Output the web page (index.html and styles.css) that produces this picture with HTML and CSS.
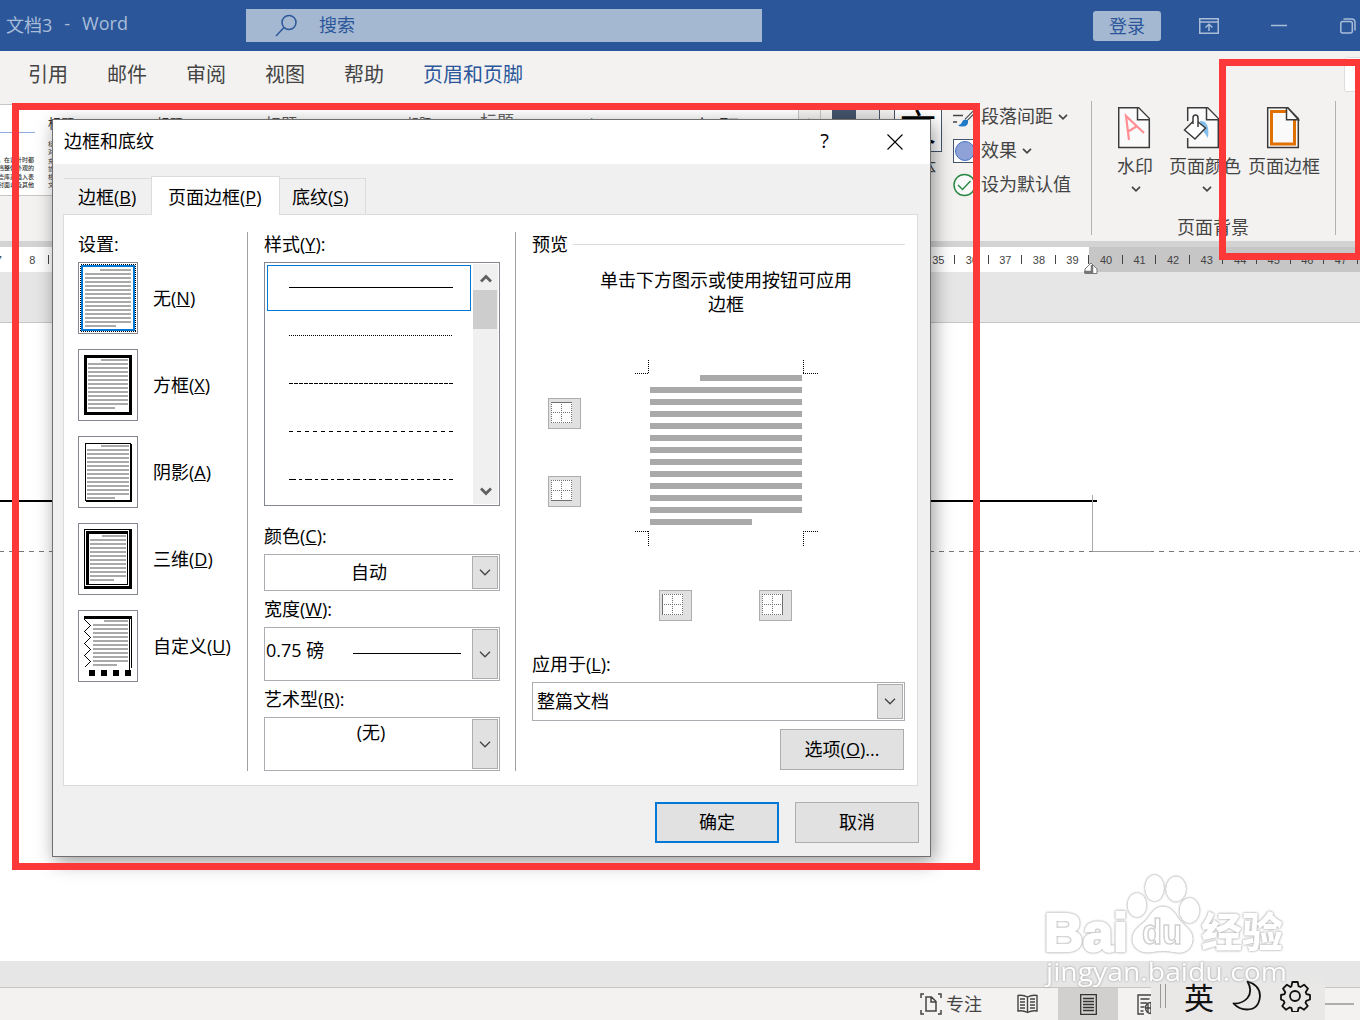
FILE: index.html
```html
<!DOCTYPE html>
<html lang="zh-CN">
  <head>
    <meta charset="utf-8">
    <title>文档3 - Word</title>
    <link rel="stylesheet" href="styles.css">
  </head>

  <body>
    <div class="app">
      <header class="titlebar">
        <div class="doc-name"><span>文档3</span><span>-</span><span class="word">Word</span></div>
        <div class="search">
          <svg width="22" height="24" viewBox="0 0 22 24" fill="none" stroke="#2b579a" stroke-width="1.5"><circle cx="14" cy="8.500" r="7"/><path d="M9 13.500L1 22"/></svg>
          <span>搜索</span>
        </div>
        <button class="login">登录</button>
        <svg class="win-icon ribbon-icon" width="20" height="16" viewBox="0 0 20 16" fill="none" stroke="#a9bdd9" stroke-width="1.500"><path d="M.75.75h18.500v14.500H.75zM1 4h18M10 13V6.500M6.500 9.500L10 6.200l3.500 3.300"/></svg>
        <svg class="win-icon min-icon" width="16" height="16" viewBox="0 0 16 16"><path d="M0 7.500h16" stroke="#a9bdd9" stroke-width="1.500"/></svg>
        <svg class="win-icon" width="16" height="16" viewBox="0 0 16 16" fill="none" stroke="#a9bdd9" stroke-width="1.500"><rect x=".8" y="3.500" width="11.500" height="11.500" rx="2"/><path d="M3.500 1h8q3.500 0 3.500 3.500v8"/></svg>
      </header>

      <nav class="tabs">
        <span>引用</span><span>邮件</span><span>审阅</span><span>视图</span><span>帮助</span><span class="current">页眉和页脚</span>
        <div class="share"></div>
      </nav>

      <div class="ribbon">
        <div class="gallery">
          <div class="style first">
            <i></i>
            <p>，在设计时都</p><p>文档整体外观的</p><p>这些库来插入表</p><p>、封面以及其他</p>
          </div>
          <div class="style second"><b>标题</b><p>标</p><p>对</p><p>充</p><p>协</p><p>格</p><p>文</p></div>
          <div class="style"><b>标题</b></div>
          <div class="style s16"><b>标题</b></div>
          <div class="style s12"><b>标题</b></div>
          <div class="style s17"><b>标题</b></div>
          <div class="style blue"><b>标题</b></div>
          <div class="style s21"><b>标题</b></div>
          <div class="more"><svg width="8" height="5" viewBox="0 0 8 5"><path d="M0 5l4-4 4 4z" fill="#aaa"/></svg></div>
        </div>
        <div class="colors"><i></i><i></i></div>
        <div class="fonts"><div class="glyph">文</div><span>字体</span></div>
        <div class="options">
          <div class="option">
            <svg width="24" height="22" viewBox="0 0 24 22" fill="none"><path d="M0 3h16M0 9.500h10M0 16h4" stroke="#444" stroke-width="1.500"/><path d="M23 4L13 14" stroke="#444" stroke-width="3.500"/><path d="M23 4L13 14" stroke="#fff" stroke-width="1.200"/><path d="M5 19q3 0 4-3 2-4 6-1.500 1 6-6 6-3 0-4-1.500z" fill="#1e7ac8"/></svg>
            <span>段落间距</span>
            <svg class="chev" width="10" height="6" viewBox="0 0 10 6"><path d="M1 .8l4 4 4-4"/></svg>
          </div>
          <div class="option">
            <svg width="24" height="24" viewBox="0 0 24 24"><rect x=".5" y=".5" width="23" height="23" fill="#fff" stroke="#44546a"/><circle cx="12" cy="12" r="9.500" fill="#8fa2d8" stroke="#4472c4"/></svg>
            <span>效果</span>
            <svg class="chev" width="10" height="6" viewBox="0 0 10 6"><path d="M1 .8l4 4 4-4"/></svg>
          </div>
          <div class="option">
            <svg width="24" height="24" viewBox="0 0 24 24" fill="none" stroke="#2d8a46" stroke-width="1.500"><circle cx="11.500" cy="12" r="10.500" fill="#fafafa"/><path d="M5 12l4.500 4.500L17.500 8"/></svg>
            <span>设为默认值</span>
          </div>
        </div>
        <div class="background-group">
          <div class="tools">
            <div class="tool">
              <svg width="34" height="44" viewBox="1 0 34 44"><path d="M1.700 1.700h20L32.300 12.500v29H1.700z" fill="#fafafa" stroke="#3b3b3b" stroke-width="1.500"/><path d="M20.500 1.700v12h12" fill="#fafafa" stroke="#3b3b3b" stroke-width="1.500"/><path d="M12 34L9 10l18 17M11.200 25.500l9-5.500" fill="none" stroke="#ff8f94" stroke-width="2.200"/></svg>
              <span>水印</span>
              <svg class="chev" width="10" height="6" viewBox="0 0 10 6"><path d="M1 .8l4 4 4-4"/></svg>
            </div>
            <div class="tool fill">
              <svg width="38" height="44" viewBox="1 0 38 44"><path d="M5.700 1.700h20L36.300 12.500v29H5.700z" fill="#fafafa" stroke="#3b3b3b" stroke-width="1.500"/><path d="M24.500 1.700v12h12" fill="#fafafa" stroke="#3b3b3b" stroke-width="1.500"/><path d="M3 15v17h5V15z" fill="#f3f2f1"/><path d="M18 15q10-1 8 17-5-6-7-12z" fill="#83beec"/><path d="M2.500 24L13 13.500 23.500 22 13 33z" fill="#fff" stroke="#3b3b3b" stroke-width="1.500"/><path d="M11 18v-6q0-3 2.500-3t2.500 3v9" fill="#fff" stroke="#3b3b3b" stroke-width="1.500"/></svg>
              <span>页面颜色</span>
              <svg class="chev" width="10" height="6" viewBox="0 0 10 6"><path d="M1 .8l4 4 4-4"/></svg>
            </div>
            <div class="tool border">
              <svg width="34" height="44" viewBox="0 0 34 44"><path d="M1.700 1.700h20L32.300 12.500v29H1.700z" fill="#fafafa" stroke="#3b3b3b" stroke-width="1.500"/><path d="M20 5.500H5.500v32.500h23V13" fill="none" stroke="#e07000" stroke-width="3"/><path d="M20.500 1.700v12h12L21.700 1.700z" fill="#fafafa" stroke="#3b3b3b" stroke-width="1.500"/></svg>
              <span>页面边框</span>
            </div>
          </div>
          <div class="group-name">页面背景</div>
        </div>
      </div>

      <div class="ruler">
        <div class="marks left"><span>7</span><span>8</span></div>
        <div class="marks"><span>35</span><span>36</span><span>37</span><span>38</span><span>39</span></div>
        <div class="marks outside"><span>40</span><span>41</span><span>42</span><span>43</span><span>44</span><span>45</span><span>46</span><span>47</span><span></span></div>
        <svg class="indent" width="14" height="13" viewBox="0 0 14 13"><path d="M1 11.500V7l6-6 6 6v4.500z" fill="#fff" stroke="#777"/><path d="M0 10h8V3" fill="none" stroke="#777" stroke-width="2.500"/></svg>
      </div>

      <main class="canvas">
        <div class="page">
          <svg width="1360" height="638" viewBox="0 0 1360 638" shape-rendering="crispEdges">
            <path d="M0 178h1097" stroke="#000" stroke-width="2"/>
            <path d="M1092.500 172v57" stroke="#aaa"/>
            <path d="M0 228.500h1360" stroke="#777" stroke-dasharray="5 5" stroke-dashoffset="1"/>
            <path d="M1092 228.500h59" stroke="#999"/>
          </svg>
        </div>
      </main>

      <footer class="status">
        <div class="focus">
          <svg width="22" height="22" viewBox="0 0 22 22" fill="none" stroke="#444" stroke-width="1.500"><path d="M4 1H1v4M1 17v4h3M18 1h3v4M21 17v4h-3M6 4h5.500L16 8.500V18H6zM11 4v5h5"/></svg>
          <span>专注</span>
        </div>
        <svg width="21" height="20" viewBox="0 0 21 20" fill="none" stroke="#444" stroke-width="1.400"><path d="M10.500 3Q6 .5 1 1.500V17q5-1 9.500 1.500Q15 16 20 17V1.500Q15 .5 10.500 3zM10.500 3v15M3 5h5M3 8h5M3 11h5M3 14h5M13 5h5M13 8h5M13 11h5M13 14h5"/></svg>
        <div class="active-view">
          <svg width="17" height="21" viewBox="0 0 17 21" fill="none" stroke="#333" stroke-width="1.300"><path d="M.7.7h15.600v19.600H.7zM3 4.500h11M3 7.500h11M3 10.500h11M3 13.500h11M3 16.500h11"/></svg>
        </div>
        <svg class="web" width="20" height="21" viewBox="0 0 20 21" fill="none" stroke="#444" stroke-width="1.400"><path d="M15 6V1H1v19h6M3.500 5h9M3.500 9h7M3.500 13h4M3.500 17h3"/><circle cx="14" cy="14" r="5.500"/><path d="M8.500 14h11M14 8.500v11M11 10v8"/></svg>
        <div class="slider"></div>
      </footer>
    </div>

    <div class="dialog">
      <div class="dialog-title">
        <span>边框和底纹</span>
        <span class="help">?</span>
        <svg width="16" height="16" viewBox="0 0 16 16"><path d="M.5.500l15 15M15.500.500l-15 15" stroke="#000" stroke-width="1.100"/></svg>
      </div>
      <div class="dialog-tabs">
        <div class="tab">边框(<u>B</u>)</div>
        <div class="tab on">页面边框(<u>P</u>)</div>
        <div class="tab">底纹(<u>S</u>)</div>
      </div>
      <div class="panel">
        <section class="settings">
          <div class="label">设置:</div>
          <div class="setting">
            <svg width="58" height="70" viewBox="1 1 58 70">
              <rect x="2.500" y="2.500" width="55" height="67" fill="none" stroke="#000" stroke-dasharray="1 1"/>
              <rect x="4" y="4" width="52" height="64" fill="none" stroke="#0078d7" stroke-width="2"/>
              <path d="M22 8h31M7 64h31" stroke="#a9a9a9" stroke-width="2"/>
              <path d="M30 11v50" stroke="#a9a9a9" stroke-width="46" stroke-dasharray="2 2"/>
            </svg>
            <span>无(<u>N</u>)</span>
          </div>
          <div class="setting">
            <svg width="58" height="70" viewBox="1 1 58 70">
              <rect x="7.500" y="7.500" width="45" height="57" fill="none" stroke="#000" stroke-width="3"/>
              <path d="M23 11h27M10 59h27" stroke="#a9a9a9" stroke-width="2"/>
              <path d="M30 14v42" stroke="#a9a9a9" stroke-width="40" stroke-dasharray="2 2"/>
            </svg>
            <span>方框(<u>X</u>)</span>
          </div>
          <div class="setting">
            <svg width="58" height="70" viewBox="1 1 58 70">
              <path d="M7.500 65V7.500H53" fill="none" stroke="#000"/>
              <path d="M53 8v57H8" fill="none" stroke="#000" stroke-width="2"/>
              <path d="M23 10h28M9 62h28" stroke="#a9a9a9" stroke-width="2"/>
              <path d="M30 13v46" stroke="#a9a9a9" stroke-width="42" stroke-dasharray="2 2"/>
            </svg>
            <span>阴影(<u>A</u>)</span>
          </div>
          <div class="setting">
            <svg width="58" height="70" viewBox="1 1 58 70">
              <path d="M6.500 66V6.500H54M49.500 9v52.500H9" fill="none" stroke="#000"/>
              <path d="M52.500 7v57.500H6M9.500 62V9.500H50" fill="none" stroke="#000" stroke-width="3"/>
              <path d="M24 13h24M12 57h24" stroke="#a9a9a9" stroke-width="2"/>
              <path d="M30 16v38" stroke="#a9a9a9" stroke-width="36" stroke-dasharray="2 2"/>
            </svg>
            <span>三维(<u>D</u>)</span>
          </div>
          <div class="setting">
            <svg width="58" height="70" viewBox="1 1 58 70">
              <path d="M6 7.500h48" stroke="#000" stroke-width="3"/>
              <path d="M51.500 9v52M53.500 9v49" stroke="#000"/>
              <path d="M6.500 9.500l6 6-6 6 6 6-6 6 6 6-6 6 6 6-6 6" fill="none" stroke="#000"/>
              <path d="M11 63h6M23 63h6M35 63h6M47 63h6" stroke="#000" stroke-width="6"/>
              <path d="M26 11h24M15 55h24" stroke="#a9a9a9" stroke-width="2"/>
              <path d="M32.500 14v38" stroke="#a9a9a9" stroke-width="35" stroke-dasharray="2 2"/>
            </svg>
            <span>自定义(<u>U</u>)</span>
          </div>
        </section>

        <section class="styles">
          <div class="label">样式(<u>Y</u>):</div>
          <div class="listbox">
            <div class="lines">
              <svg class="selected" width="204" height="46"><path d="M21 21.500h164"/></svg>
              <svg width="204" height="46"><path d="M22 22.500h164" stroke-dasharray="1 1"/></svg>
              <svg width="204" height="46"><path d="M22 22.500h164" stroke-dasharray="4 1"/></svg>
              <svg width="204" height="46"><path d="M22 22.500h164" stroke-dasharray="4 4"/></svg>
              <svg width="204" height="46"><path d="M22 22.500h164" stroke-dasharray="7 3 3 3"/></svg>
            </div>
            <div class="scrollbar">
              <svg width="12" height="9" viewBox="0 0 12 9"><path d="M1 7.500l5-5 5 5"/></svg>
              <div class="thumb"></div>
              <svg width="12" height="9" viewBox="0 0 12 9"><path d="M1 1.500l5 5 5-5"/></svg>
            </div>
          </div>
          <div class="label after-list">颜色(<u>C</u>):</div>
          <div class="combo color"><span>自动</span><i><svg width="12" height="7" viewBox="0 0 12 7"><path d="M1 .8l5 5 5-5"/></svg></i></div>
          <div class="label">宽度(<u>W</u>):</div>
          <div class="combo width"><span>0.75 磅</span><b></b><i><svg width="12" height="7" viewBox="0 0 12 7"><path d="M1 .8l5 5 5-5"/></svg></i></div>
          <div class="label">艺术型(<u>R</u>):</div>
          <div class="combo art"><span>(无)</span><i><svg width="12" height="7" viewBox="0 0 12 7"><path d="M1 .8l5 5 5-5"/></svg></i></div>
        </section>

        <section class="preview">
          <div class="legend">预览</div>
          <p>单击下方图示或使用按钮可应用<br>边框</p>
          <div class="preview-row">
            <div class="side">
              <button class="edge"><svg width="21" height="21"><rect width="21" height="21" fill="#fff"/><path d="M0 20.500h21M.5 0v21M20.500 0v21M0 10.500h21M10.500 0v21" stroke-dasharray="1 1"/><path d="M0 .5h21"/></svg></button>
              <button class="edge"><svg width="21" height="21"><rect width="21" height="21" fill="#fff"/><path d="M0 .5h21M.5 0v21M20.500 0v21M0 10.500h21M10.500 0v21" stroke-dasharray="1 1"/><path d="M0 20.500h21"/></svg></button>
            </div>
            <svg width="183" height="186" viewBox="0 0 183 186" shape-rendering="crispEdges">
              <path d="M0 13.500h14M13.500 0v13M168 13.500h15M168.500 0v13M0 171.500h14M13.500 171v15M168 171.500h15M168.500 171v15" stroke="#000" stroke-dasharray="1 1"/>
              <path d="M65 18h102M15 162h102" stroke="#a9a9a9" stroke-width="6"/>
              <path d="M91 27v126" stroke="#a9a9a9" stroke-width="152" stroke-dasharray="6 6"/>
            </svg>
          </div>
          <div class="bottom">
            <button class="edge"><svg width="21" height="21"><rect width="21" height="21" fill="#fff"/><path d="M0 .5h21M0 20.500h21M20.500 0v21M0 10.500h21M10.500 0v21" stroke-dasharray="1 1"/><path d="M.5 0v21"/></svg></button>
            <button class="edge"><svg width="21" height="21"><rect width="21" height="21" fill="#fff"/><path d="M0 .5h21M0 20.500h21M.5 0v21M0 10.500h21M10.500 0v21" stroke-dasharray="1 1"/><path d="M20.500 0v21"/></svg></button>
          </div>
          <div class="label">应用于(<u>L</u>):</div>
          <div class="combo apply"><span>整篇文档</span><i><svg width="12" height="7" viewBox="0 0 12 7"><path d="M1 .8l5 5 5-5"/></svg></i></div>
          <button class="btn">选项(<u>O</u>)...</button>
        </section>
      </div>
      <div class="buttons">
        <button class="btn default">确定</button>
        <button class="btn">取消</button>
      </div>
    </div>

    <div class="mark mark-dialog"></div>
    <div class="mark mark-border"></div>

    <div class="ime">
      <i></i>
      <span>英</span>
      <svg width="30" height="32" viewBox="0 0 30 32" fill="none" stroke="#111" stroke-width="1.800" stroke-linejoin="round"><path d="M15.500 1.500Q28 5 28 16 27 29.500 15 29.500 7 29.500 1.500 23.500 10 24 15.500 18 21 11 15.500 1.500z"/></svg>
      <svg width="32" height="32" viewBox="0 0 32 32" fill="none" stroke="#111" stroke-width="1.800" stroke-linejoin="round"><circle cx="16" cy="16" r="5"/><path d="M13.300 2h5.400l.8 4.100 2 .9 3.600-2.300 3.900 3.900-2.300 3.600.8 2 3.500.8v4.500l-3.700 1.300-.8 1.900 2.200 3.400-3.600 3.600-3.600-2.300-2 .8-.8 3.800h-5.400l-.8-3.800-2-.8-3.600 2.300-3.600-3.600 2.200-3.400-.8-1.900L2 19.500V15l3.500-.8.8-2L4 8.600l3.900-3.900L11.500 7l1-.9z"/></svg>
    </div>

    <svg class="watermark" width="260" height="120" viewBox="0 0 260 120">
      <g fill="#fff">
        <ellipse cx="106" cy="35" rx="9.500" ry="12"/>
        <ellipse cx="123.500" cy="18" rx="9.500" ry="13"/>
        <ellipse cx="145" cy="19" rx="10" ry="12.500"/>
        <ellipse cx="158.500" cy="40.500" rx="10" ry="12.500"/>
        <path d="M132 36.500q7 0 12 7 4 7 11 13 9 8 6 17-4 11-16 9-13-3-26 0-13 1-17-9-3-10 7-18 6-4 11-12 5-7 12-7z"/>
      </g>
      <g class="wm-text">
        <text x="13" y="81" font-size="54" textLength="84" lengthAdjust="spacingAndGlyphs">Bai</text>
        <text class="du" x="111" y="74" font-size="35" textLength="40" lengthAdjust="spacingAndGlyphs">du</text>
        <text class="cn" x="170" y="77" font-size="41">经验</text>
      </g>
      <text class="wm-url" x="15" y="111" font-size="26" textLength="241" lengthAdjust="spacingAndGlyphs">jingyan.baidu.com</text>
    </svg>
  </body>
</html>
```
FILE: styles.css
```css
* {
  box-sizing: border-box;
}
body {
  margin: 0;
  width: 1360px;
  height: 1020px;
  overflow: hidden;
  position: relative;
  font-family: "Open Sans", "Noto Sans CJK SC", sans-serif;
  font-size: 18px;
  color: #444;
}
p {
  margin: 0;
}
svg {
  display: block;
  flex: none;
}
button {
  font: inherit;
  padding: 0;
}
.app {
  display: flex;
  flex-direction: column;
  width: 1360px;
  height: 1020px;
  overflow: hidden;
}

/* title bar */
.titlebar {
  height: 51px;
  flex: none;
  display: flex;
  align-items: center;
  background: #2b579a;
  color: #a9bdd9;
}
.doc-name {
  width: 246px;
  padding: 0 0 4px 6px;
  display: flex;
  gap: 12px;
}
.search {
  width: 516px;
  height: 33px;
  display: flex;
  align-items: center;
  gap: 22px;
  padding-left: 29px;
  background: #a5b8d1;
  color: #2b579a;
}
.search span {
  padding-bottom: 3px;
}
.login {
  width: 68px;
  height: 30px;
  margin-left: 331px;
  padding-bottom: 2px;
  border: 0;
  border-radius: 3px;
  background: #a5b8d1;
  color: #2b579a;
}
.ribbon-icon {
  margin-left: 38px;
}
.min-icon {
  margin: 0 53px 0 52px;
}

/* ribbon */
.tabs {
  height: 50px;
  flex: none;
  display: flex;
  align-items: center;
  gap: 39px;
  padding: 0 0 5px 28px;
  background: #f3f2f1;
  font-size: 20px;
  white-space: nowrap;
}
.tabs span {
  flex: none;
}
.tabs .current {
  color: #2b579a;
}
.share {
  width: 40px;
  height: 35px;
  margin: 1px 0 0 782px;
  flex: none;
  background: #fff;
  border: 1px solid #ddd;
  border-radius: 3px;
}
.ribbon {
  height: 146px;
  flex: none;
  display: flex;
  background: #f3f2f1;
  border-bottom: 6px solid #d3d3d3;
}
.gallery {
  width: 821px;
  height: 92px;
  margin-top: 3px;
  display: flex;
  flex: none;
  overflow: hidden;
  background: #fff;
  border: 1px solid #c8c6c4;
  border-left: 0;
}
.style {
  width: 108.500px;
  flex: none;
  padding-top: 11px;
  font-size: 13px;
  line-height: 15px;
  color: #333;
}
.style b {
  font-weight: 400;
  display: block;
}
.style p {
  font-size: 6px;
  line-height: 8.300px;
  white-space: nowrap;
}
.first {
  width: 48px;
  padding-top: 27px;
}
.first i {
  display: block;
  width: 35px;
  height: 1px;
  margin-bottom: 23px;
  background: #8faadc;
}
.first p {
  width: 34px;
  display: flex;
  justify-content: flex-end;
  font-weight: 500;
}
.second b {
  margin-bottom: 9px;
}
.s16 {
  width: 142px;
  font-size: 16px;
  padding-top: 12px;
  color: #555;
}
.s12 {
  width: 73px;
  font-size: 12px;
}
.s17 {
  font-size: 17px;
  color: #666;
  padding-top: 9px;
}
.blue {
  color: #5a78b0;
  padding-top: 12px;
}
.s21 {
  width: 101px;
  font-size: 21px;
  padding-top: 15px;
}
.more {
  width: 22px;
  padding: 12px 0 0 6px;
  background: #f3f2f1;
  border-left: 1px solid #c8c6c4;
}
.colors {
  width: 48px;
  height: 48px;
  margin: 3px 0 0 11px;
  display: flex;
  flex: none;
  border: 1px solid #44546a;
}
.colors i {
  flex: 1;
  background: #44546a;
}
.colors i + i {
  background: #e7e6e6;
}
.fonts {
  width: 48px;
  margin: 3px 0 0 14px;
  flex: none;
  text-align: center;
}
.glyph {
  height: 48px;
  border: 1px solid #44546a;
  background: #fff;
  color: #000;
  font-size: 36px;
  line-height: 46px;
}
.fonts span {
  line-height: 30px;
}
.options {
  width: 138px;
  margin-left: 11px;
  flex: none;
}
.option {
  height: 34px;
  display: flex;
  align-items: center;
}
.option span {
  margin: -6px 5px 0 0;
  flex: none;
}
.option svg {
  margin-top: -3px;
}
.option svg:first-child {
  width: 24px;
  margin-right: 4px;
}
.chev path {
  fill: none;
  stroke: #444;
  stroke-width: 1.700;
}
.background-group {
  width: 245px;
  height: 134px;
  flex: none;
  border: solid #b5b3b1;
  border-width: 0 1px;
}
.tools {
  display: flex;
  height: 113px;
  padding: 5px 0 0 25px;
}
.tool {
  display: flex;
  flex-direction: column;
  align-items: center;
}
.tool span {
  line-height: 24px;
  margin: 4px 0 8px;
}
.tool .chev {
  margin-left: 2px;
}
.fill {
  margin-left: 16px;
}
.fill > svg:first-child {
  margin-right: 6px;
}
.fill .chev {
  margin-left: 4px;
}
.border {
  margin-left: 7px;
}
.border > svg {
  margin-right: 2px;
}
.group-name {
  padding-left: 85px;
  line-height: 24px;
  margin-top: 1px;
}

/* ruler */
.ruler {
  height: 25px;
  flex: none;
  display: flex;
  background: #fff;
  position: relative;
  font: 11px "Liberation Sans", sans-serif;
}
.marks {
  display: flex;
  align-items: center;
  flex: none;
}
.marks span {
  width: 33.560px;
  flex: none;
  text-align: center;
  background: linear-gradient(#444, #444) right center / 1px 9px no-repeat;
}
.left {
  margin-left: -18px;
  width: 939.500px;
}
.outside {
  background: #c6c6c6;
}
.indent {
  position: absolute;
  left: 1084px;
  top: 15px;
}

/* document area */
.canvas {
  flex: 1;
  padding: 50px 0 26px;
  background: #e6e6e6;
}
.page {
  height: 639px;
  background: #fff;
  border-top: 1px solid #c6c6c6;
}
.status {
  height: 33px;
  flex: none;
  display: flex;
  align-items: center;
  padding-left: 920px;
  background: #f3f2f1;
  border-top: 1px solid #c8c6c4;
}
.focus {
  width: 97px;
  display: flex;
  align-items: center;
  gap: 4px;
}
.focus span {
  padding-bottom: 2px;
}
.active-view {
  width: 60px;
  height: 32px;
  margin-left: 20px;
  display: flex;
  align-items: center;
  justify-content: center;
  background: #d2d0ce;
}
.web {
  margin-left: 19px;
}
.slider {
  width: 29px;
  height: 2px;
  margin-left: 168px;
  background: #b0aeac;
}

/* borders and shading dialog */
.dialog {
  position: absolute;
  left: 52px;
  top: 119px;
  width: 879px;
  height: 738px;
  background: #f0f0f0;
  border: 1px solid #707070;
  box-shadow: 3px 5px 18px rgba(0, 0, 0, 0.4);
  color: #000;
  line-height: 24px;
}
.dialog-title {
  height: 44px;
  display: flex;
  align-items: center;
  padding: 0 27px 2px 11px;
  background: #fff;
}
.dialog-title svg {
  margin-top: 2px;
}
.help {
  margin: 0 58px 0 auto;
  font-size: 20px;
}
.dialog-tabs {
  height: 50px;
  display: flex;
  align-items: flex-end;
  padding-left: 11px;
}
.tab {
  height: 36px;
  padding: 6px 14px 0 14px;
  border: 1px solid #dcdcdc;
  border-width: 1px 1px 0 0;
  width: 87px;
  white-space: nowrap;
}
.tab:first-child {
  border-right: 0;
}
.tab.on {
  width: 129px;
  height: 39px;
  margin-bottom: -1px;
  padding: 8px 0 0 16px;
  background: #fff;
  border-left-width: 1px;
  z-index: 1;
}
.tab:last-child {
  width: 86px;
  padding-left: 12px;
}
.panel {
  width: 855px;
  height: 572px;
  margin-left: 10px;
  padding: 17px 12px 14px 14px;
  display: flex;
  background: #fff;
  border: 1px solid #dcdcdc;
}
.label {
  height: 24px;
  margin-bottom: 6px;
}
.settings {
  width: 170px;
  border-right: 1px solid #a0a0a0;
}
.setting {
  display: flex;
  align-items: center;
  gap: 15px;
  margin-bottom: 15px;
}
.setting span {
  white-space: nowrap;
}
.setting svg {
  width: 60px;
  height: 72px;
  border: 1px solid #828790;
  shape-rendering: crispEdges;
}
.styles {
  width: 268px;
  padding: 0 15px 0 16px;
  border-right: 1px solid #a0a0a0;
}
.listbox {
  height: 244px;
  padding: 1px;
  display: flex;
  justify-content: space-between;
  border: 1px solid #828790;
}
.lines {
  display: flex;
  flex-direction: column;
  gap: 2px;
  padding: 1px;
}
.lines svg {
  stroke: #000;
  shape-rendering: crispEdges;
}
.selected {
  border: 1px solid #0078d7;
}
.scrollbar {
  width: 25px;
  padding: 10px 0 8px;
  display: flex;
  flex-direction: column;
  align-items: center;
  background: #f0f0f0;
}
.scrollbar path {
  fill: none;
  stroke: #606060;
  stroke-width: 2.800;
}
.thumb {
  width: 24px;
  height: 39px;
  margin: 7px 1px auto 0;
  background: #cdcdcd;
}
.after-list {
  margin-top: 18px;
}
.combo {
  display: flex;
  padding: 1px;
  margin-bottom: 6px;
  border: 1px solid #abadb3;
}
.combo span {
  flex: 1;
}
.combo i {
  width: 26px;
  display: flex;
  align-items: center;
  justify-content: center;
  padding-right: 1px;
  background: #e1e1e1;
  border: 1px solid #adadad;
}
.combo path {
  fill: none;
  stroke: #444;
  stroke-width: 1.300;
}
.color {
  height: 37px;
  text-align: center;
  line-height: 33px;
}
.width {
  height: 54px;
  line-height: 42px;
}
.width b {
  width: 108px;
  height: 1px;
  margin: 24px 11px 0 0;
  background: #000;
}
.art {
  height: 54px;
  margin: 0;
  text-align: center;
  line-height: 27px;
}
.art span {
  padding-left: 4px;
}
.preview {
  width: 389px;
  padding-left: 16px;
}
.legend {
  display: flex;
  align-items: center;
  gap: 5px;
}
.legend::after {
  content: "";
  flex: 1;
  height: 1px;
  background: #dcdcdc;
}
.preview p {
  margin: 12px 0 44px 15px;
  text-align: center;
}
.preview-row {
  display: flex;
  gap: 54px;
  padding-left: 16px;
}
.side {
  display: flex;
  flex-direction: column;
  gap: 47px;
  padding-top: 38px;
}
.edge {
  width: 33px;
  height: 31px;
  padding: 0 0 2px 2px;
  background: #e1e1e1;
  border: 1px solid #adadad;
}
.edge path {
  stroke: #707070;
  shape-rendering: crispEdges;
}
.bottom {
  display: flex;
  gap: 67px;
  margin: 44px 0 31px;
  padding-left: 127px;
}
.apply {
  height: 39px;
  line-height: 35px;
  padding-left: 4px;
  margin-bottom: 8px;
}
.btn {
  width: 124px;
  height: 41px;
  padding-bottom: 2px;
  display: block;
  background: #e1e1e1;
  border: 1px solid #adadad;
  color: #000;
}
.preview .btn {
  margin: 0 1px 0 auto;
}
.default {
  border: 2px solid #0078d7;
}
.buttons {
  display: flex;
  justify-content: flex-end;
  gap: 16px;
  padding: 16px 11px 0 0;
}

/* highlight frames */
.mark {
  position: absolute;
  border: 7px solid #fd3838;
}
.mark-dialog {
  left: 12px;
  top: 103px;
  width: 968px;
  height: 767px;
}
.mark-border {
  left: 1219px;
  top: 59px;
  width: 143px;
  height: 201px;
}

/* input method bar */
.ime {
  position: absolute;
  left: 1151px;
  top: 972px;
  width: 174px;
  height: 48px;
  padding-left: 9px;
  display: flex;
  align-items: center;
  background: linear-gradient(#e6e6e6, #e9e8e7 16px);
  color: #111;
  font-size: 30px;
}
.ime i {
  width: 6px;
  height: 24px;
  margin-right: 18px;
  border: solid #999;
  border-width: 0 1px;
}
.ime span {
  margin-right: 18px;
  padding-bottom: 1px;
}
.ime svg + svg {
  margin-left: 17px;
}
.watermark {
  position: absolute;
  left: 1031px;
  top: 870px;
  filter: drop-shadow(0 0 1px #aaa) drop-shadow(0 0 0.500px #ccc);
}
.wm-text {
  font-family: "Liberation Sans", sans-serif;
  font-weight: 700;
  fill: #fff;
  stroke: #fff;
  stroke-width: 2.500;
}
.wm-text .du {
  font-weight: 700;
  stroke: #d0d0d0;
  stroke-width: 1.500;
}
.cn {
  font-family: "Noto Sans CJK SC", sans-serif;
  font-weight: 900;
  stroke-width: 0;
}
.wm-url {
  font-family: "Open Sans", sans-serif;
  fill: #fff;
}
```
